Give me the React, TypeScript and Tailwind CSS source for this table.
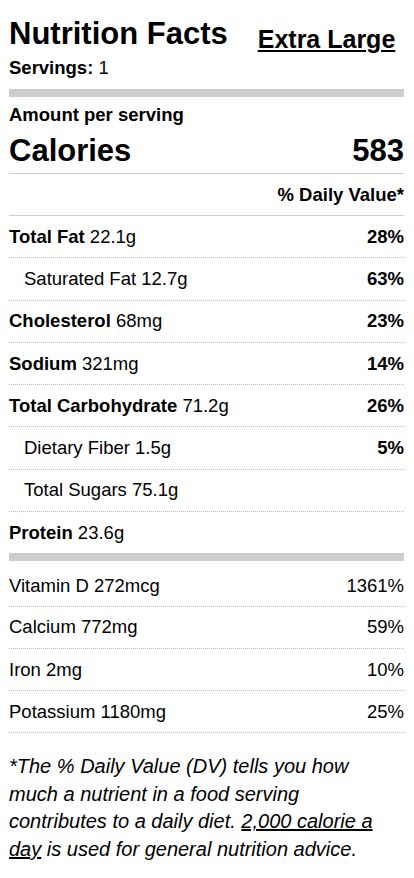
const nutrients = [
  { label: "Total Fat", amount: "22.1g", dv: "28%", bold: true },
  { label: "Saturated Fat", amount: "12.7g", dv: "63%", indent: true },
  { label: "Cholesterol", amount: "68mg", dv: "23%", bold: true },
  { label: "Sodium", amount: "321mg", dv: "14%", bold: true },
  { label: "Total Carbohydrate", amount: "71.2g", dv: "26%", bold: true },
  { label: "Dietary Fiber", amount: "1.5g", dv: "5%", indent: true },
  { label: "Total Sugars", amount: "75.1g", dv: "", indent: true },
];

const vitamins = [
  { label: "Calcium", amount: "772mg", dv: "59%" },
  { label: "Iron", amount: "2mg", dv: "10%" },
  { label: "Potassium", amount: "1180mg", dv: "25%" },
];

const App = () => {
  return (
    <div
      className="min-h-screen bg-white pl-[9px] pr-[10px] text-black"
      style={{ fontFamily: '"Liberation Sans", Arial, sans-serif' }}
    >
      {/* header */}
      <div className="flex items-start pt-[15px]">
        <h1 className="text-[31px] leading-[37px] font-bold">Nutrition Facts</h1>
        <span className="ml-[30px] mt-[10px] text-[25px] leading-[29px] font-bold underline decoration-2 underline-offset-[2px]">
          Extra Large
        </span>
      </div>
      <p className="mt-[3px] text-[18.5px] leading-[22px]">
        <span className="font-bold">Servings:</span> 1
      </p>
      <div className="mt-[10px] h-[8px] bg-[#cccccc]"></div>

      <p className="mt-[7px] text-[18.5px] leading-[22px] font-bold">Amount per serving</p>
      <div className="mt-[7px] flex justify-between border-b border-[#cccccc] pb-[4px] text-[31px] leading-[36px] font-bold">
        <span>Calories</span>
        <span>583</span>
      </div>
      <div className="border-b border-[#cccccc] pt-[10px] pb-[9px] text-right text-[18.5px] leading-[22px] font-bold">
        % Daily Value*
      </div>

      {nutrients.map((n) => (
        <div
          key={n.label}
          className="flex h-[42.3px] items-center justify-between border-b border-dotted border-[#bbbbbb] text-[18.5px] leading-[22px]"
        >
          <span className={n.indent ? "pl-[15px]" : ""}>
            {n.bold ? <span className="font-bold">{n.label}</span> : n.label} {n.amount}
          </span>
          <span className="font-bold">{n.dv}</span>
        </div>
      ))}
      <div className="flex h-[41px] items-center text-[18.5px] leading-[22px]">
        <span>
          <span className="font-bold">Protein</span> 23.6g
        </span>
      </div>
      <div className="h-[8px] bg-[#cccccc]"></div>

      <div className="flex h-[45.5px] items-end justify-between border-b border-dotted border-[#bbbbbb] pb-[9px] text-[18.5px] leading-[22px]">
        <span>Vitamin D 272mcg</span>
        <span>1361%</span>
      </div>
      {vitamins.map((v) => (
        <div
          key={v.label}
          className="flex h-[42.3px] items-center justify-between border-b border-dotted border-[#bbbbbb] text-[18.5px] leading-[22px]"
        >
          <span>
            {v.label} {v.amount}
          </span>
          <span>{v.dv}</span>
        </div>
      ))}

      <p className="pt-[20px] pr-[25px] text-[20px] leading-[27.5px] italic">
        *The % Daily Value (DV) tells you how much a nutrient in a food serving contributes to a
        daily diet. <span className="underline">2,000 calorie a</span>{" "}
        <span className="underline">day</span> is used for general nutrition advice.
      </p>
    </div>
  );
};

export default App;
